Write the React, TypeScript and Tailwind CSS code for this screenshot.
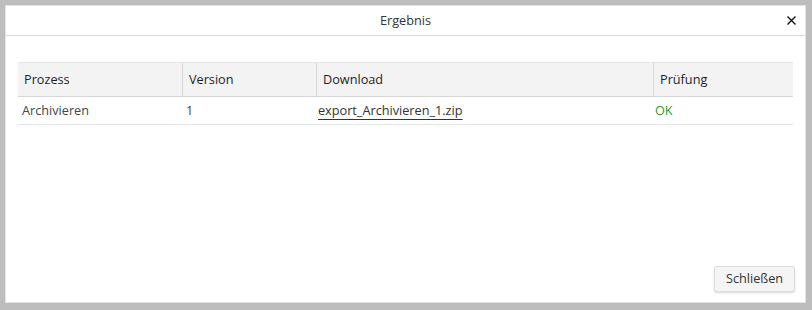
import React from 'react';

const columns = [
  { label: 'Prozess', width: 'w-[164px]' },
  { label: 'Version', width: 'w-[134px]' },
  { label: 'Download', width: 'w-[337px]' },
  { label: 'Prüfung', width: 'flex-1' },
];

const App: React.FC = () => {
  return (
    <div
      className="w-[812px] h-[310px] bg-[#bdbdbd] pt-[5px] pl-[5px] pr-[6px] pb-[7px]"
      style={{ fontFamily: '"Open Sans", "Noto Sans", sans-serif' }}
    >
      <div className="flex h-full flex-col bg-white border border-[#e4e4e4] text-[12.7px] text-[#333]">
        {/* Kopfzeile */}
        <div className="relative flex h-[30px] shrink-0 items-center justify-center border-b border-[#dadada]">
          <span className="text-[12.7px] text-[#333]">Ergebnis</span>
          <button className="absolute right-[9px] top-[10px] leading-none">
            <svg width="9" height="9" viewBox="0 0 9 9">
              <path d="M0.5 0.5 L8.5 8.5 M8.5 0.5 L0.5 8.5" stroke="#111" strokeWidth="1.4" />
            </svg>
          </button>
        </div>

        {/* Tabelle */}
        <div className="mx-[12px] mt-[26px]">
          <div className="flex h-[35px] items-center border-y border-t-[#e6e6e6] border-b-[#d6d6d6] bg-[#f3f3f3] text-[#1f1f1f]">
            {columns.map((c, i) => (
              <div
                key={c.label}
                className={`${c.width} flex h-full items-center px-[6px] ${i > 0 ? 'border-l border-[#d8d8d8]' : ''}`}
              >
                {c.label}
              </div>
            ))}
          </div>
          <div className="flex h-[28px] items-center border-b border-[#e4e4e4] text-[#444]">
            <div className="w-[164px] px-[4px]">Archivieren</div>
            <div className="w-[134px] px-[4px]">1</div>
            <div className="w-[337px] px-[2px]">
              <a className="text-[#333] underline underline-offset-[4px] decoration-[#333]">export_Archivieren_1.zip</a>
            </div>
            <div className="flex-1 px-[2px] text-[#2f9a2f]">OK</div>
          </div>
        </div>

        {/* Fußzeile */}
        <div className="mt-auto flex justify-end pb-[10px] pr-[10px]">
          <button className="h-[26px] w-[81px] rounded-[3px] border border-[#dcdcdc] bg-[#f5f5f5] text-[12.7px] text-[#333] shadow-[0_1px_2px_rgba(0,0,0,0.15)]">
            Schließen
          </button>
        </div>
      </div>
    </div>
  );
};

export default App;
